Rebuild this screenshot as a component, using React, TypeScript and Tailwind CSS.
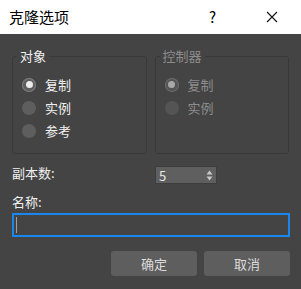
import React, { useState } from 'react';

const font = { fontFamily: '"Noto Sans CJK SC", "Noto Sans", sans-serif' };

const Radio: React.FC<{ label: string; checked: boolean; disabled?: boolean; onClick?: () => void }> = ({
  label,
  checked,
  disabled,
  onClick,
}) => (
  <button onClick={onClick} className="flex items-center h-[23px] gap-[9px] text-left">
    <span
      className={`w-[14px] h-[14px] rounded-full flex items-center justify-center ${
        disabled ? 'bg-[#545454]' : 'bg-[#5e5e5e]'
      } ${checked ? (disabled ? 'ring-1 ring-[#6a6a6a] ring-inset' : 'ring-1 ring-[#7c7c7c] ring-inset') : ''}`}
    >
      {checked && (
        <span className={`w-[7px] h-[7px] rounded-full ${disabled ? 'bg-[#a8a8a8]' : 'bg-[#ececec]'}`} />
      )}
    </span>
    <span className={`text-[13px] leading-none ${disabled ? 'text-[#8c8c8c]' : 'text-[#f0f0f0]'}`}>{label}</span>
  </button>
);

const App: React.FC = () => {
  const [mode, setMode] = useState('copy');

  return (
    <div className="w-[301px] h-[289px] bg-[#444444] flex flex-col overflow-hidden" style={font}>
      {/* Title bar */}
      <div className="h-[34px] bg-white flex items-center shrink-0">
        <span className="ml-[9px] text-[15px] text-black">克隆选项</span>
        <span className="ml-auto mr-[50px] text-[15px] text-black">?</span>
        <svg width="12" height="12" viewBox="0 0 12 12" className="mr-[23px]">
          <path d="M1 1L11 11M11 1L1 11" stroke="#111" strokeWidth="1.1" />
        </svg>
      </div>

      <div className="px-[12px] pt-[14px] flex flex-col">
        <div className="flex gap-[8px]">
          <fieldset className="w-[136px] h-[106px] border border-[#393939] rounded-[3px] px-[9px]">
            <legend className="-ml-[5px] px-[3px] text-[13px] leading-[16px] text-[#f0f0f0]">对象</legend>
            <div className="flex flex-col pt-[9px]">
              <Radio label="复制" checked={mode === 'copy'} onClick={() => setMode('copy')} />
              <Radio label="实例" checked={mode === 'instance'} onClick={() => setMode('instance')} />
              <Radio label="参考" checked={mode === 'ref'} onClick={() => setMode('ref')} />
            </div>
          </fieldset>
          <fieldset className="w-[136px] h-[106px] border border-[#393939] rounded-[3px] px-[9px]">
            <legend className="-ml-[5px] px-[3px] text-[13px] leading-[16px] text-[#8c8c8c]">控制器</legend>
            <div className="flex flex-col pt-[9px]">
              <Radio label="复制" checked disabled />
              <Radio label="实例" checked={false} disabled />
            </div>
          </fieldset>
        </div>

        <div className="flex items-center mt-[12px] h-[18px]">
          <span className="w-[143px] text-[13px] text-[#f0f0f0] -mt-[4px]">副本数:</span>
          <div className="w-[62px] h-[18px] bg-[#5f5f5f] border border-[#3d3d3d] flex items-center pl-[3px] pr-[3px]">
            <span className="text-[13px] text-[#e8e8e8] leading-none">5</span>
            <svg width="7" height="11" viewBox="0 0 7 11" className="ml-auto">
              <path d="M3.5 0.5L6.5 4.5H0.5Z" fill="#c8c8c8" />
              <path d="M3.5 10.5L6.5 6.5H0.5Z" fill="#c8c8c8" />
            </svg>
          </div>
        </div>

        <span className="mt-[10px] text-[13px] leading-[16px] text-[#f0f0f0]">名称:</span>
        <div className="mt-[3px] w-[278px] h-[24px] border-2 border-[#1a86f0] flex items-center pl-[2px]">
          <span className="w-[1px] h-[16px] bg-[#a0a0a0]" />
        </div>

        <div className="flex justify-end gap-[7px] mt-[14px] mr-[-1px]">
          <button className="w-[86px] h-[25px] rounded-[3px] bg-[#5e5e5e] text-[13px] text-[#dcdcdc]">确定</button>
          <button className="w-[86px] h-[25px] rounded-[3px] bg-[#5e5e5e] text-[13px] text-[#dcdcdc]">取消</button>
        </div>
      </div>
    </div>
  );
};

export default App;
